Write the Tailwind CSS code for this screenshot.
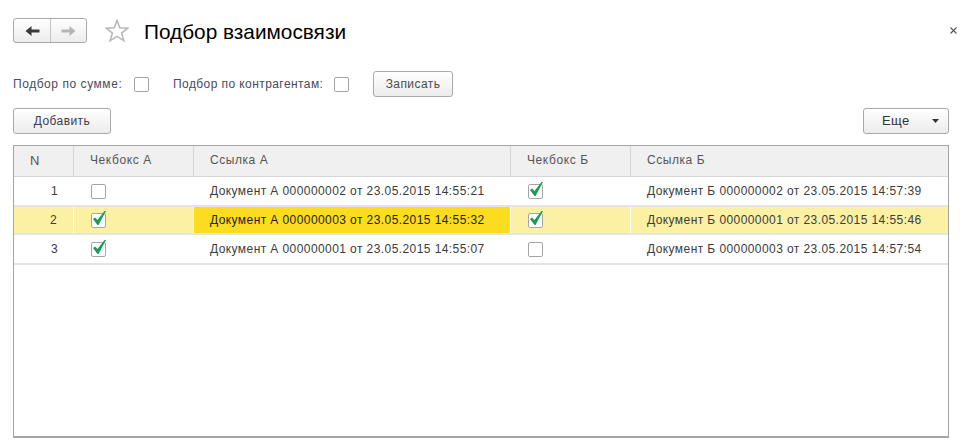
<!DOCTYPE html>
<html lang="ru">
<head>
    <meta charset="UTF-8">
    <title>Подбор взаимосвязи</title>
    <script src="https://cdn.jsdelivr.net/npm/@tailwindcss/browser@4"></script>
</head>
<body class="bg-white font-['Liberation_Sans',Arial,sans-serif] text-[12px] tracking-[0.42px] text-[#3c3c3c] overflow-hidden">
    <div class="relative w-[971px] h-[447px] px-[13px] pt-[18px]">

        <!-- Title bar -->
        <header class="flex items-center h-[25px]">
            <div class="flex w-[74px] h-[25px] rounded-[3px] border border-[#a9a9a9] bg-gradient-to-b from-white to-[#ececec]">
                <div class="flex items-center justify-center w-[37px] border-r border-[#c4c4c4]">
                    <svg class="w-[15px] h-[12px]" viewBox="0 0 15 12"><path fill="#3a3a3a" d="M0.5 6 L6.5 1 V4.5 H14.5 V7.5 H6.5 V11 Z"/></svg>
                </div>
                <div class="flex items-center justify-center flex-1">
                    <svg class="w-[15px] h-[12px]" viewBox="0 0 15 12"><path fill="#b5b5b5" d="M14.5 6 L8.5 1 V4.5 H0.5 V7.5 H8.5 V11 Z"/></svg>
                </div>
            </div>
            <svg class="ml-[18px] w-[24px] h-[23px]" viewBox="0 0 24 23"><path fill="#fff" stroke="#b8b8b8" stroke-width="1.6" d="M12 1.5 L14.8 8.8 L22.8 9.2 L16.6 14 L18.8 21.6 L12 17.4 L5.2 21.6 L7.4 14 L1.2 9.2 L9.2 8.8 Z"/></svg>
            <h1 class="ml-[15px] mt-[2px] text-[20.8px] leading-[25px] tracking-normal text-black">Подбор взаимосвязи</h1>
            <svg class="absolute left-[950px] top-[27px] w-[7px] h-[7px]" viewBox="0 0 7 7"><path fill="none" stroke="#555" stroke-width="1.1" d="M0.5 0.5 L6.5 6.5 M6.5 0.5 L0.5 6.5"/></svg>
        </header>

        <!-- Filters -->
        <div class="flex items-center h-[26px] mt-[28px] text-[#4b4b5a]">
            <span class="w-[109px] whitespace-nowrap tracking-[0.55px]">Подбор по сумме:</span>
            <span class="ml-[12px] w-[15px] h-[15px] rounded-[2px] border border-[#a5a5a5] bg-white"></span>
            <span class="ml-[24px] w-[149px] whitespace-nowrap">Подбор по контрагентам:</span>
            <span class="ml-[12px] w-[15px] h-[15px] rounded-[2px] border border-[#a5a5a5] bg-white"></span>
            <button class="ml-[24px] w-[80px] h-[26px] rounded-[3px] border border-[#a9a9a9] bg-gradient-to-b from-white to-[#ececec] text-[#4b4b4b]">Записать</button>
        </div>

        <!-- Toolbar -->
        <div class="flex justify-between w-[936px] h-[26px] mt-[11px]">
            <button class="w-[98px] h-[26px] rounded-[3px] border border-[#a9a9a9] bg-gradient-to-b from-white to-[#ececec] text-[#3c3c4b]">Добавить</button>
            <button class="flex items-center w-[86px] h-[26px] rounded-[3px] border border-[#a9a9a9] bg-gradient-to-b from-white to-[#ececec] text-[#333] text-[13px] pl-[18px]">
                <span class="w-[50px] text-left">Еще</span>
                <svg class="w-[7px] h-[4px]" viewBox="0 0 7 4"><path fill="#333" d="M0 0 H7 L3.5 4 Z"/></svg>
            </button>
        </div>

        <!-- Table -->
        <div class="w-[936px] h-[293px] mt-[11px] border border-[#a5a5a5] border-b-2">
            <div class="flex h-[31px] bg-[#f0f0f0] border-b border-[#d6d6d6] leading-[29px] text-[#555]">
                <div class="w-[60px] border-r border-[#d6d6d6] pl-[16px] text-[13px]">N</div>
                <div class="w-[120px] border-r border-[#d6d6d6] pl-[16px] tracking-[0.6px]">Чекбокс А</div>
                <div class="w-[317px] border-r border-[#d6d6d6] pl-[16px] tracking-[0.55px]">Ссылка А</div>
                <div class="w-[120px] border-r border-[#d6d6d6] pl-[16px] tracking-[0.6px]">Чекбокс Б</div>
                <div class="flex-1 pl-[16px] tracking-[0.55px]">Ссылка Б</div>
            </div>

            <div class="flex h-[30px] border-b-2 border-[#e4e4e4] leading-[28px]">
                <div class="w-[60px] pr-[16px] text-right">1</div>
                <div class="flex items-center w-[120px] pl-[17px]">
                    <span class="w-[15px] h-[15px] rounded-[2px] border border-[#a5a5a5] bg-white"></span>
                </div>
                <div class="w-[317px] pl-[16px]">Документ А 000000002 от 23.05.2015 14:55:21</div>
                <div class="flex items-center w-[120px] pl-[17px]">
                    <span class="relative w-[15px] h-[15px] rounded-[2px] border border-[#a5a5a5] bg-white">
                        <svg class="absolute left-0 top-[-3px] w-[15px] h-[15px]" viewBox="0 0 15 15"><path fill="#1a9c55" d="M1 8 L3 6.5 L5.5 9 L12.5 0 L14 0 L6.5 14 L5.5 14 Z"/></svg>
                    </span>
                </div>
                <div class="flex-1 pl-[16px]">Документ Б 000000002 от 23.05.2015 14:57:39</div>
            </div>

            <div class="flex h-[28px] border-b-2 border-[#e4e4e4] leading-[26px] bg-[#fcf0a3]">
                <div class="w-[60px] border-r border-white pr-[16px] text-right">2</div>
                <div class="flex items-center w-[120px] border-r border-white pl-[17px]">
                    <span class="relative w-[15px] h-[15px] rounded-[2px] border border-[#a5a5a5] bg-white">
                        <svg class="absolute left-0 top-[-3px] w-[15px] h-[15px]" viewBox="0 0 15 15"><path fill="#1a9c55" d="M1 8 L3 6.5 L5.5 9 L12.5 0 L14 0 L6.5 14 L5.5 14 Z"/></svg>
                    </span>
                </div>
                <div class="w-[317px] border-r border-white pl-[16px] bg-[#fcdc1f] text-[#222]">Документ А 000000003 от 23.05.2015 14:55:32</div>
                <div class="flex items-center w-[120px] border-r border-white pl-[17px]">
                    <span class="relative w-[15px] h-[15px] rounded-[2px] border border-[#a5a5a5] bg-white">
                        <svg class="absolute left-0 top-[-3px] w-[15px] h-[15px]" viewBox="0 0 15 15"><path fill="#1a9c55" d="M1 8 L3 6.5 L5.5 9 L12.5 0 L14 0 L6.5 14 L5.5 14 Z"/></svg>
                    </span>
                </div>
                <div class="flex-1 pl-[16px]">Документ Б 000000001 от 23.05.2015 14:55:46</div>
            </div>

            <div class="flex h-[30px] border-b-2 border-[#e4e4e4] leading-[28px]">
                <div class="w-[60px] pr-[16px] text-right">3</div>
                <div class="flex items-center w-[120px] pl-[17px]">
                    <span class="relative w-[15px] h-[15px] rounded-[2px] border border-[#a5a5a5] bg-white">
                        <svg class="absolute left-0 top-[-3px] w-[15px] h-[15px]" viewBox="0 0 15 15"><path fill="#1a9c55" d="M1 8 L3 6.5 L5.5 9 L12.5 0 L14 0 L6.5 14 L5.5 14 Z"/></svg>
                    </span>
                </div>
                <div class="w-[317px] pl-[16px]">Документ А 000000001 от 23.05.2015 14:55:07</div>
                <div class="flex items-center w-[120px] pl-[17px]">
                    <span class="w-[15px] h-[15px] rounded-[2px] border border-[#a5a5a5] bg-white"></span>
                </div>
                <div class="flex-1 pl-[16px]">Документ Б 000000003 от 23.05.2015 14:57:54</div>
            </div>
        </div>
    </div>
</body>
</html>
